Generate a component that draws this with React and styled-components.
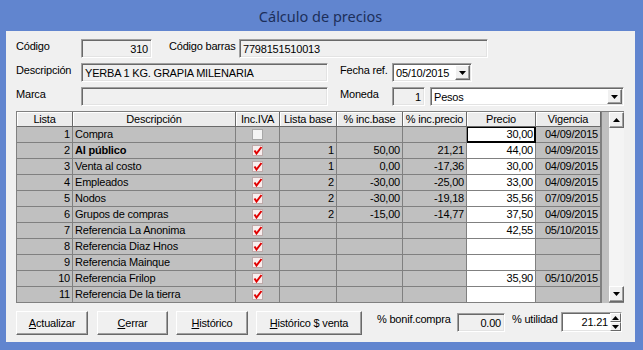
import React from 'react'
import styled, { createGlobalStyle } from 'styled-components'

const FONT = `"Liberation Sans", Arial, sans-serif`

const GlobalStyle = createGlobalStyle`
  html, body {
    margin: 0;
    padding: 0;
    background: #6185cf;
  }
  #root {
    width: 643px;
    height: 350px;
  }
`

const Window = styled.div`
  width: 643px;
  height: 350px;
  box-sizing: border-box;
  background: #6185cf;
  display: flex;
  flex-direction: column;
  padding: 0 8px 8px 6px;
`

const TitleBar = styled.div`
  height: 31px;
  display: flex;
  align-items: center;
  justify-content: center;
  font-family: "Noto Sans", "Open Sans", sans-serif;
  font-size: 14.5px;
  color: #1c2f5a;
`

const Panel = styled.div`
  flex: 1;
  background: #f0f0f0;
  padding: 8px 0 0 10px;
  font-family: ${FONT};
  font-size: 11px;
  letter-spacing: -0.2px;
  color: #000;
  display: flex;
  flex-direction: column;
`

const FieldRow = styled.div`
  display: flex;
  align-items: flex-start;
  height: 19px;
  margin-bottom: 5px;
`

const Label = styled.div`
  width: ${p => p.$w}px;
  margin-left: ${p => p.$ml || 0}px;
  padding-top: 1px;
  white-space: nowrap;
  flex: none;
`

const Field = styled.div`
  width: ${p => p.$w}px;
  height: 19px;
  margin-left: ${p => p.$ml || 0}px;
  box-sizing: border-box;
  flex: none;
  display: flex;
  align-items: center;
  justify-content: ${p => (p.$right ? 'flex-end' : 'flex-start')};
  padding: 0 3px;
  background: ${p => (p.$white ? '#fff' : '#f0f0f0')};
  border: 1px solid;
  border-color: #a0a0a0 #fff #fff #a0a0a0;
  box-shadow: inset 1px 1px 0 #696969, inset -1px -1px 0 #e3e3e3;
  white-space: nowrap;
  overflow: hidden;
`

const ComboText = styled.span`
  flex: 1;
`

const DropButton = styled.div`
  width: 15px;
  height: 15px;
  margin-right: -2px;
  box-sizing: border-box;
  background: #f0f0f0;
  border: 1px solid;
  border-color: #fff #696969 #696969 #fff;
  box-shadow: inset -1px -1px 0 #a0a0a0;
  display: flex;
  align-items: center;
  justify-content: center;
`

const Arrow = ({ up }) => (
  <svg width="7" height="4" viewBox="0 0 7 4">
    <polygon points={up ? '0,4 7,4 3.5,0' : '0,0 7,0 3.5,4'} fill="#000" />
  </svg>
)

const GridBox = styled.div`
  display: flex;
  width: 608px;
  border-top: 1px solid #808080;
  border-left: 1px solid #808080;
  box-sizing: border-box;
  background: #c0c0c0;
`

const Table = styled.div`
  width: 584px;
  display: flex;
  flex-direction: column;
`

const GridRow = styled.div`
  display: grid;
  grid-template-columns: 56px 163px 44px 57px 66px 64px 69px 65px;
  height: ${p => (p.$head ? 15 : 16)}px;
`

const HeadCell = styled.div`
  box-sizing: border-box;
  background: #ececec;
  border-right: 1px solid #696969;
  border-bottom: 1px solid #696969;
  box-shadow: inset 1px 1px 0 #fff;
  text-align: center;
  line-height: 14px;
  white-space: nowrap;
  overflow: hidden;
`

const Cell = styled.div`
  box-sizing: border-box;
  background: ${p => (p.$white ? '#fff' : '#c0c0c0')};
  border-right: 1px solid #808080;
  border-bottom: 1px solid #808080;
  padding: 0 2px;
  line-height: 15px;
  text-align: ${p => p.$align || 'right'};
  font-weight: ${p => (p.$bold ? 'bold' : 'normal')};
  white-space: nowrap;
  overflow: hidden;
  display: ${p => (p.$center ? 'flex' : 'block')};
  align-items: center;
  justify-content: center;
  ${p => p.$focus && 'box-shadow: inset 0 0 0 1px #000; border-color: #000;'}
`

const Strip = styled.div`
  width: 7px;
  border-left: 1px solid #808080;
  background: #c0c0c0;
`

const ScrollBar = styled.div`
  width: 16px;
  display: flex;
  flex-direction: column;
  justify-content: space-between;
  background: #f4f4f4;
  border-bottom: 1px solid #808080;
`

const ScrollButton = styled.div`
  height: 16px;
  box-sizing: border-box;
  background: #f0f0f0;
  border: 1px solid;
  border-color: #fff #696969 #696969 #fff;
  box-shadow: inset -1px -1px 0 #a0a0a0;
  display: flex;
  align-items: center;
  justify-content: center;
`

const BottomBar = styled.div`
  display: flex;
  align-items: flex-start;
  margin-top: 8px;
`

const Button = styled.div`
  width: ${p => p.$w}px;
  height: 24px;
  margin-left: ${p => p.$ml || 0}px;
  box-sizing: border-box;
  flex: none;
  background: #f0f0f0;
  border: 1px solid;
  border-color: #fff #696969 #696969 #fff;
  box-shadow: inset -1px -1px 0 #a0a0a0;
  display: flex;
  align-items: center;
  justify-content: center;
  white-space: nowrap;
`

const BottomLabel = styled(Label)`
  padding-top: 2px;
`

const BottomField = styled(Field)`
  margin-top: 2px;
`

const SpinBox = styled(Field)`
  height: 20px;
  margin-top: 1px;
  padding: 0 0 0 3px;
`

const SpinText = styled.span`
  flex: 1;
  text-align: right;
  padding-right: 2px;
`

const SpinButtons = styled.div`
  width: 11px;
  align-self: stretch;
  display: flex;
  flex-direction: column;
`

const SpinHalf = styled.div`
  flex: 1;
  box-sizing: border-box;
  background: #f0f0f0;
  border: 1px solid;
  border-color: #fff #696969 #696969 #fff;
  display: flex;
  align-items: center;
  justify-content: center;
`

const Check = ({ on }) => (
  <svg width="11" height="11" viewBox="0 0 11 11">
    <rect x="0.5" y="0.5" width="10" height="10" fill={on ? '#f8eeee' : '#f4f4f4'} stroke={on ? '#bdaaaa' : '#a8a8a8'} />
    {on && <path d="M2.5 5.5 L4.5 8.5 L9.5 2" fill="none" stroke="#e00000" strokeWidth="2" />}
  </svg>
)

const rows = [
  ['1', 'Compra', false, '', '', '', '30,00', '04/09/2015'],
  ['2', 'Al público', true, '1', '50,00', '21,21', '44,00', '04/09/2015'],
  ['3', 'Venta al costo', true, '1', '0,00', '-17,36', '30,00', '04/09/2015'],
  ['4', 'Empleados', true, '2', '-30,00', '-25,00', '33,00', '04/09/2015'],
  ['5', 'Nodos', true, '2', '-30,00', '-19,18', '35,56', '07/09/2015'],
  ['6', 'Grupos de compras', true, '2', '-15,00', '-14,77', '37,50', '04/09/2015'],
  ['7', 'Referencia La Anonima', true, '', '', '', '42,55', '05/10/2015'],
  ['8', 'Referencia Diaz Hnos', true, '', '', '', '', ''],
  ['9', 'Referencia Mainque', true, '', '', '', '', ''],
  ['10', 'Referencia Frilop', true, '', '', '', '35,90', '05/10/2015'],
  ['11', 'Referencia De la tierra', true, '', '', '', '', ''],
]

const headers = ['Lista', 'Descripción', 'Inc.IVA', 'Lista base', '% inc.base', '% inc.precio', 'Precio', 'Vigencia']

export default function App() {
  return (
    <>
      <GlobalStyle />
      <Window>
        <TitleBar>Cálculo de precios</TitleBar>
        <Panel>
          <FieldRow>
            <Label $w={65}>Código</Label>
            <Field $w={71} $right>310</Field>
            <Label $w={70} $ml={17}>Código barras</Label>
            <Field $w={249}>7798151510013</Field>
          </FieldRow>
          <FieldRow>
            <Label $w={65}>Descripción</Label>
            <Field $w={247}>YERBA 1 KG. GRAPIA MILENARIA</Field>
            <Label $w={52} $ml={12}>Fecha ref.</Label>
            <Field $w={80} $white>
              <ComboText>05/10/2015</ComboText>
              <DropButton><Arrow /></DropButton>
            </Field>
          </FieldRow>
          <FieldRow>
            <Label $w={65}>Marca</Label>
            <Field $w={247} />
            <Label $w={52} $ml={12}>Moneda</Label>
            <Field $w={33} $right>1</Field>
            <Field $w={194} $ml={5} $white>
              <ComboText>Pesos</ComboText>
              <DropButton><Arrow /></DropButton>
            </Field>
          </FieldRow>

          <GridBox>
            <Table>
              <GridRow $head>
                {headers.map(h => <HeadCell key={h}>{h}</HeadCell>)}
              </GridRow>
              {rows.map((r, i) => (
                <GridRow key={r[0]}>
                  <Cell>{r[0]}</Cell>
                  <Cell $align="left" $bold={i === 1}>{r[1]}</Cell>
                  <Cell $center><Check on={r[2]} /></Cell>
                  <Cell>{r[3]}</Cell>
                  <Cell>{r[4]}</Cell>
                  <Cell>{r[5]}</Cell>
                  <Cell $white $focus={i === 0}>{r[6]}</Cell>
                  <Cell>{r[7]}</Cell>
                </GridRow>
              ))}
            </Table>
            <Strip />
            <ScrollBar>
              <ScrollButton><Arrow up /></ScrollButton>
              <ScrollButton><Arrow /></ScrollButton>
            </ScrollBar>
          </GridBox>

          <BottomBar>
            <Button $w={72}><span><u>A</u>ctualizar</span></Button>
            <Button $w={71} $ml={9}><span><u>C</u>errar</span></Button>
            <Button $w={72} $ml={8}><span><u>H</u>istórico</span></Button>
            <Button $w={106} $ml={8}><span><u>H</u>istórico $ venta</span></Button>
            <BottomLabel $w={80} $ml={15}>% bonif.compra</BottomLabel>
            <BottomField $w={48} $right>0.00</BottomField>
            <BottomLabel $w={49} $ml={7}>% utilidad</BottomLabel>
            <SpinBox $w={61} $white>
              <SpinText>21.21</SpinText>
              <SpinButtons>
                <SpinHalf><Arrow up /></SpinHalf>
                <SpinHalf><Arrow /></SpinHalf>
              </SpinButtons>
            </SpinBox>
          </BottomBar>
        </Panel>
      </Window>
    </>
  )
}
